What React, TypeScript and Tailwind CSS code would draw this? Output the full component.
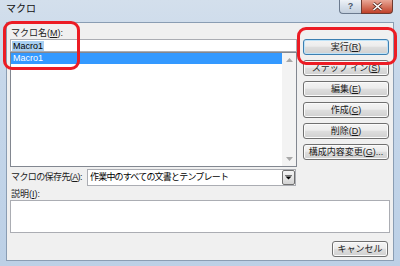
import clsx from "clsx";
import type { ReactNode } from "react";

const font = "font-['Liberation_Sans','Noto_Sans_CJK_JP',sans-serif]";

function Btn({ children, primary, className }: { children: ReactNode; primary?: boolean; className?: string }) {
  return (
    <div
      className={clsx(
        "h-[16px] rounded-[3px] border flex items-center justify-center text-[9px] leading-none text-[#1a1a1a] bg-[linear-gradient(#f4f4f4,#ececec_45%,#dedede_50%,#d0d0d0)]",
        primary
          ? "border-[#3c7fb1] shadow-[inset_0_0_0_1px_#bfe3f8]"
          : "border-[#707070] shadow-[inset_0_0_0_1px_#fbfbfb]",
        className
      )}
    >
      {children}
    </div>
  );
}

function U({ children }: { children: ReactNode }) {
  return <span className="underline underline-offset-1">{children}</span>;
}

function Arrow({ up, color = "#a8a8a8" }: { up?: boolean; color?: string }) {
  return (
    <svg width="7" height="4" viewBox="0 0 7 4">
      <path d={up ? "M0 4 L3.5 0 L7 4 Z" : "M0 0 L7 0 L3.5 4 Z"} fill={color} />
    </svg>
  );
}

export default function App() {
  return (
    <div
      className={clsx(
        "relative w-[400px] h-[266px] overflow-hidden flex flex-col px-[6px] pb-[5px] bg-[linear-gradient(180deg,#d3dfec,#c6d7ea_30%,#bcd0e6)]",
        font
      )}
    >
      {/* title bar */}
      <div className="h-[22px] flex justify-between items-start shrink-0">
        <span className="pt-[3px] text-[10px] text-[#111] leading-[12px]">マクロ</span>
        <div className="flex mr-[1px]">
          <div className="w-[22px] h-[14px] rounded-bl-[4px] border border-[#6b7a8e] border-t-0 border-r-0 bg-[linear-gradient(#eef2f7,#d6dfea_50%,#c3cfdd)] flex items-center justify-center text-[9px] font-bold text-[#4a5668] leading-none">
            ?
          </div>
          <div className="w-[32px] h-[14px] rounded-br-[4px] border border-[#6e3a30] border-t-0 bg-[linear-gradient(#e9a797,#d5755f_50%,#c0402a)] flex items-center justify-center">
            <svg width="11" height="9" viewBox="0 0 11 9">
              <path d="M1.5 1 L9.5 8 M9.5 1 L1.5 8" stroke="#5a2a20" strokeWidth="3" />
              <path d="M1.5 1 L9.5 8 M9.5 1 L1.5 8" stroke="#ffffff" strokeWidth="1.6" />
            </svg>
          </div>
        </div>
      </div>

      {/* client area */}
      <div className="flex-1 bg-[#f0f0f0] border border-[#8a9db3] flex flex-col pl-[3px] pt-[5px] text-[9px] text-[#1a1a1a]">
        <div className="flex">
          <div className="w-[287px] flex flex-col">
            <div className="h-[11px] leading-[11px] pl-[1px]">
              マクロ名(<U>M</U>):
            </div>
            <div className="h-[13px] border border-[#abadb3] bg-white flex items-center pl-[1px]">
              <span className="bg-[#a8cff1] px-[1px] leading-[10px] text-black">Macro1</span>
            </div>
            <div className="h-[115px] border border-[#828790] bg-white flex">
              <div className="flex-1">
                <div className="h-[11px] bg-[#3399ff] text-white leading-[11px] pl-[2px]">Macro1</div>
              </div>
              <div className="w-[14px] bg-[#f3f3f3] flex flex-col justify-between items-center py-[5px]">
                <Arrow up />
                <Arrow />
              </div>
            </div>
          </div>
          <div className="ml-[6px] w-[86px] pt-[11px] flex flex-col gap-[5px]">
            <Btn primary>
              実行(<U>R</U>)
            </Btn>
            <Btn>
              ステップ イン(<U>S</U>)
            </Btn>
            <Btn>
              編集(<U>E</U>)
            </Btn>
            <Btn>
              作成(<U>C</U>)
            </Btn>
            <Btn>
              削除(<U>D</U>)
            </Btn>
            <Btn>
              構成内容変更(<U>G</U>)...
            </Btn>
          </div>
        </div>

        <div className="mt-[2px] flex items-center h-[17px]">
          <div className="w-[77px] pl-[1px] tracking-[-0.6px]">
            マクロの保存先(<U>A</U>):
          </div>
          <div className="w-[209px] h-[17px] border border-[#abadb3] bg-white flex items-center">
            <span className="flex-1 pl-[2px] tracking-[-0.8px] text-black">作業中のすべての文書とテンプレート</span>
            <div className="w-[13px] h-[15px] border border-[#707070] rounded-[2px] bg-[linear-gradient(#f4f4f4,#e6e6e6_50%,#d2d2d2)] flex items-center justify-center">
              <svg width="7" height="5" viewBox="0 0 7 5">
                <path d="M0 0 H7" stroke="#000" strokeWidth="1" />
                <path d="M0.5 1.5 H6.5 L3.5 4.5 Z" fill="#000" />
              </svg>
            </div>
          </div>
        </div>

        <div className="mt-[3px] h-[11px] leading-[11px] pl-[1px]">
          説明(<U>I</U>):
        </div>
        <div className="w-[380px] h-[33px] border border-[#abadb3] bg-white" />

        <div className="w-[378px] flex justify-end mt-[8px]">
          <Btn className="w-[56px]">キャンセル</Btn>
        </div>
      </div>

      {/* red annotation outlines */}
      <div className="absolute left-[3px] top-[21px] w-[77px] h-[49px] border-[3px] border-[#ec1c24] rounded-[9px]" />
      <div className="absolute left-[297px] top-[27px] w-[100px] h-[38px] border-[3px] border-[#ec1c24] rounded-[9px]" />
    </div>
  );
}
